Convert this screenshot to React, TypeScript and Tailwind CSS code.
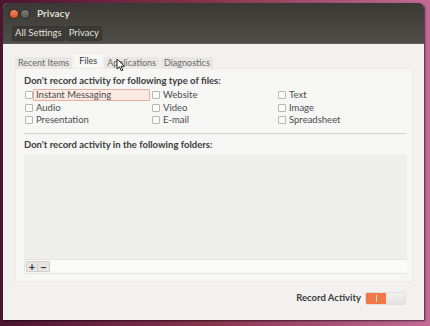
import React from "react";

const font = { fontFamily: 'Lato, "Open Sans", sans-serif' };

function Check({ label, focus }: { label: string; focus?: boolean }) {
  return (
    <div className="flex items-center h-[12.5px]">
      <span className="w-[8px] h-[8px] border border-[#b9b7b2] bg-[#fbfbfa] rounded-[1px] shrink-0" />
      <span
        className={
          focus
            ? "pl-[2px] w-[117px] h-[12px] flex items-center bg-[#fbe9e4] border border-[#e6b0a0] rounded-[1px] text-[#4c4c4c]"
            : "ml-[3px] text-[#4c4c4c]"
        }
      >
        {label}
      </span>
    </div>
  );
}

function Cursor() {
  return (
    <svg className="absolute left-[116px] top-[58px]" width="10" height="14" viewBox="0 0 10 14">
      <path d="M1 1 L1 11 L3.5 8.8 L5.3 12.8 L6.8 12.1 L5.1 8.3 L8.4 8.3 Z" fill="#fff" stroke="#222" strokeWidth="1" strokeLinejoin="round" />
    </svg>
  );
}

export default function App() {
  return (
    <div
      className="relative w-[430px] h-[326px] overflow-hidden bg-gradient-to-r from-[#4d1530] via-[#8a3550] to-[#c46a96] pt-[3px] pl-[3px]"
      style={font}
    >
      <div className="w-[421px] h-[317px] rounded-t-[5px] overflow-hidden bg-[#f2f1f0] flex flex-col shadow-[1px_1px_2px_rgba(0,0,0,0.6)]">
        {/* title bar */}
        <div className="h-[41px] bg-gradient-to-b from-[#3a3935] to-[#4f4d47] border-b border-[#5f5d57] px-[6px] pt-[3px]">
          <div className="flex items-center h-[15px]">
            <span className="w-[10px] h-[10px] rounded-full bg-gradient-to-b from-[#f28a5a] to-[#d8501f] border border-[#3a2a22]" />
            <span className="w-[10px] h-[10px] rounded-full bg-gradient-to-b from-[#7d7b75] to-[#5b5953] border border-[#2e2d2a] ml-[1px]" />
            <span className="ml-[7px] text-[10px] font-bold text-[#dfdbd2]">Privacy</span>
          </div>
          <div className="flex mt-[5px] ml-[3px] text-[9.5px] text-[#e4e1da]">
            <span className="h-[15px] px-[2px] flex items-center bg-[#3b3a36] border border-[#35342f] rounded-[2px]">All Settings</span>
            <span className="h-[15px] px-[2px] flex items-center bg-[#3b3a36] border border-[#35342f] rounded-[2px] ml-[1px]">Privacy</span>
          </div>
        </div>

        {/* body */}
        <div className="flex-1 flex flex-col px-[12px] pt-[10px]">
          <div className="flex items-end text-[9px] text-[#6a6965] h-[14px]">
            <span className="h-[11px] px-[3px] flex items-center bg-[#e8e7e4] rounded-t-[2px]">Recent Items</span>
            <span className="h-[14px] px-[5px] ml-[2px] flex items-center bg-[#f7f7f6] rounded-t-[2px] text-[#3c3c3c]">Files</span>
            <span className="h-[11px] px-[3px] ml-[2px] flex items-center bg-[#e8e7e4] rounded-t-[2px]">Applications</span>
            <span className="h-[11px] px-[3px] ml-[2px] flex items-center bg-[#e8e7e4] rounded-t-[2px]">Diagnostics</span>
          </div>
          <div className="w-[398px] h-[214px] bg-[#f6f6f5] border border-[#ecebe9] flex flex-col px-[8px] pt-[6px] text-[9.5px] text-[#4c4c4c]">
            <div className="font-bold text-[#3c3c3c] h-[12px] flex items-center">
              Don't record activity for following type of files:
            </div>
            <div className="grid grid-cols-[127px_126px_1fr] mt-[2px] ml-[1px]">
              <div className="flex flex-col">
                <Check label="Instant Messaging" focus />
                <Check label="Audio" />
                <Check label="Presentation" />
              </div>
              <div className="flex flex-col">
                <Check label="Website" />
                <Check label="Video" />
                <Check label="E-mail" />
              </div>
              <div className="flex flex-col">
                <Check label="Text" />
                <Check label="Image" />
                <Check label="Spreadsheet" />
              </div>
            </div>
            <div className="mt-[6px] h-px bg-[#d4d3cf] w-[382px]" />
            <div className="font-bold text-[#3c3c3c] h-[12px] flex items-center mt-[6px]">
              Don't record activity in the following folders:
            </div>
            <div className="mt-[3px] w-[383px] h-[104px] bg-[#eeeeec]" />
            <div className="w-[383px] h-[15px] bg-[#fafaf9] border-y border-l border-[#e4e3e0] flex items-center pl-[1px]">
              <span className="w-[12px] h-[11px] bg-[#e6e5e2] border border-[#d2d1cd] flex items-center justify-center text-[11px] leading-none font-bold text-[#333]">+</span>
              <span className="w-[12px] h-[11px] bg-[#e6e5e2] border border-[#d2d1cd] border-l-0 flex items-center justify-center text-[11px] leading-none font-bold text-[#333]">−</span>
            </div>
          </div>

          <div className="flex items-center justify-end mt-[9px] w-[391px]">
            <span className="text-[9.5px] font-bold text-[#3c3c3c] mr-[4px]">Record Activity</span>
            <div className="w-[41px] h-[13px] flex rounded-[2px] overflow-hidden border border-[#e0dfdc]">
              <div className="w-[20px] bg-[#f07746] flex items-center justify-center">
                <span className="w-px h-[7px] bg-[#fbd7c6]" />
              </div>
              <div className="flex-1 bg-gradient-to-b from-[#f2f2f1] to-[#e2e1de]" />
            </div>
          </div>
        </div>
      </div>
      <Cursor />
    </div>
  );
}
